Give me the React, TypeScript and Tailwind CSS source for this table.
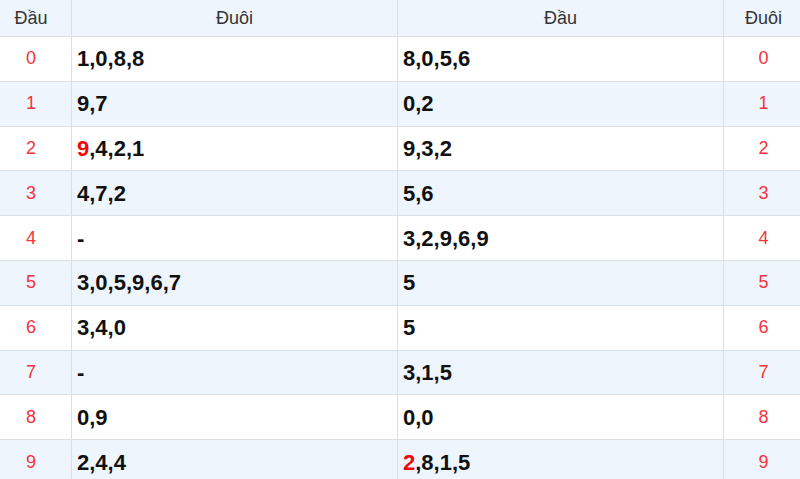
import React from 'react';

type Row = { dau: number; duoi: string; hl1?: boolean; dau2: string; hl2?: boolean };

const rows: Row[] = [
  { dau: 0, duoi: '1,0,8,8', dau2: '8,0,5,6' },
  { dau: 1, duoi: '9,7', dau2: '0,2' },
  { dau: 2, duoi: '9,4,2,1', hl1: true, dau2: '9,3,2' },
  { dau: 3, duoi: '4,7,2', dau2: '5,6' },
  { dau: 4, duoi: '-', dau2: '3,2,9,6,9' },
  { dau: 5, duoi: '3,0,5,9,6,7', dau2: '5' },
  { dau: 6, duoi: '3,4,0', dau2: '5' },
  { dau: 7, duoi: '-', dau2: '3,1,5' },
  { dau: 8, duoi: '0,9', dau2: '0,0' },
  { dau: 9, duoi: '2,4,4', dau2: '2,8,1,5', hl2: true },
];

function Value({ text, highlight }: { text: string; highlight?: boolean }) {
  if (!highlight) return <span>{text}</span>;
  return (
    <span>
      <span className="text-[#ee0a0a]">{text[0]}</span>
      {text.slice(1)}
    </span>
  );
}

export default function App() {
  return (
    <div className="w-[800px] h-[479px] overflow-hidden bg-white font-['Liberation_Sans',Arial,sans-serif]">
      {/* header */}
      <div className="grid grid-cols-[71px_326px_326px_77px] h-[36px] bg-[#eef5fd] text-[18px] text-[#333]">
        <div className="flex items-center justify-center pr-[9px]">Đầu</div>
        <div className="flex items-center justify-center border-l border-[#dcdfe4]">Đuôi</div>
        <div className="flex items-center justify-center border-l border-[#dcdfe4]">Đầu</div>
        <div className="flex items-center justify-center pl-[3px] border-l border-[#dcdfe4]">Đuôi</div>
      </div>

      {rows.map((r, i) => (
        <div
          key={r.dau}
          className={`grid grid-cols-[71px_326px_326px_77px] h-[44.8px] border-t border-[#dcdfe4] ${
            i % 2 === 1 ? 'bg-[#eef5fd]' : 'bg-white'
          }`}
        >
          <div className="flex items-center justify-center pr-[9px] text-[18px] text-[#f5333b]">{r.dau}</div>
          <div className="flex items-center pl-[5px] border-l border-[#dcdfe4] text-[22px] font-bold text-[#111]">
            <Value text={r.duoi} highlight={r.hl1} />
          </div>
          <div className="flex items-center pl-[5px] border-l border-[#dcdfe4] text-[22px] font-bold text-[#111]">
            <Value text={r.dau2} highlight={r.hl2} />
          </div>
          <div className="flex items-center justify-center pl-[3px] border-l border-[#dcdfe4] text-[18px] text-[#f5333b]">{r.dau}</div>
        </div>
      ))}
    </div>
  );
}
